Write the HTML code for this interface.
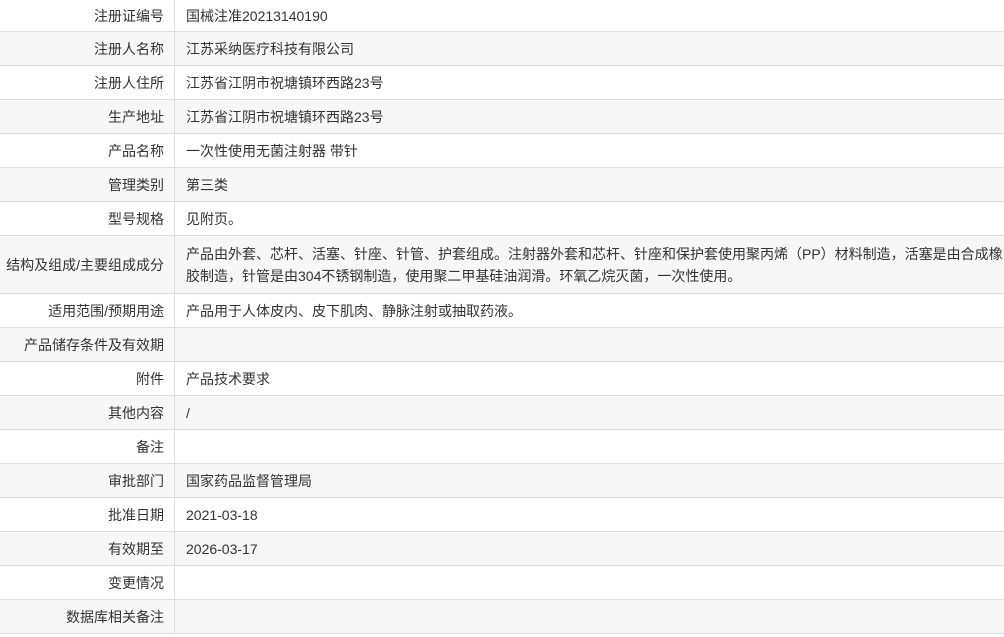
<!DOCTYPE html>
<html><head><meta charset="utf-8"><style>
body{margin:0;background:#fff;font-family:"Liberation Sans","Noto Sans CJK SC",sans-serif;font-size:14px;color:#333;width:1004px;height:637px;overflow:hidden}
.r{display:flex;border-bottom:1px solid #ddd;box-sizing:border-box;height:34px}
.r:nth-child(even){background:#f7f7f7}
.l{width:175px;border-right:1px solid #ddd;text-align:right;padding-right:10px;box-sizing:border-box;display:flex;align-items:center;justify-content:flex-end;flex:none;white-space:nowrap}
.v{padding-left:11px;display:flex;align-items:center;line-height:22px;padding-right:0}
</style></head><body>
<div class="r" style="height:32px"><div class="l">注册证编号</div><div class="v">国械注准20213140190</div></div>
<div class="r"><div class="l">注册人名称</div><div class="v">江苏采纳医疗科技有限公司</div></div>
<div class="r"><div class="l">注册人住所</div><div class="v">江苏省江阴市祝塘镇环西路23号</div></div>
<div class="r"><div class="l">生产地址</div><div class="v">江苏省江阴市祝塘镇环西路23号</div></div>
<div class="r"><div class="l">产品名称</div><div class="v">一次性使用无菌注射器 带针</div></div>
<div class="r"><div class="l">管理类别</div><div class="v">第三类</div></div>
<div class="r"><div class="l">型号规格</div><div class="v">见附页。</div></div>
<div class="r" style="height:58px"><div class="l">结构及组成/主要组成成分</div><div class="v">产品由外套、芯杆、活塞、针座、针管、护套组成。注射器外套和芯杆、针座和保护套使用聚丙烯（PP）材料制造，活塞是由合成橡胶制造，针管是由304不锈钢制造，使用聚二甲基硅油润滑。环氧乙烷灭菌，一次性使用。</div></div>
<div class="r"><div class="l">适用范围/预期用途</div><div class="v">产品用于人体皮内、皮下肌肉、静脉注射或抽取药液。</div></div>
<div class="r"><div class="l">产品储存条件及有效期</div><div class="v"></div></div>
<div class="r"><div class="l">附件</div><div class="v">产品技术要求</div></div>
<div class="r"><div class="l">其他内容</div><div class="v">/</div></div>
<div class="r"><div class="l">备注</div><div class="v"></div></div>
<div class="r"><div class="l">审批部门</div><div class="v">国家药品监督管理局</div></div>
<div class="r"><div class="l">批准日期</div><div class="v">2021-03-18</div></div>
<div class="r"><div class="l">有效期至</div><div class="v">2026-03-17</div></div>
<div class="r"><div class="l">变更情况</div><div class="v"></div></div>
<div class="r"><div class="l">数据库相关备注</div><div class="v"></div></div>
</body></html>
